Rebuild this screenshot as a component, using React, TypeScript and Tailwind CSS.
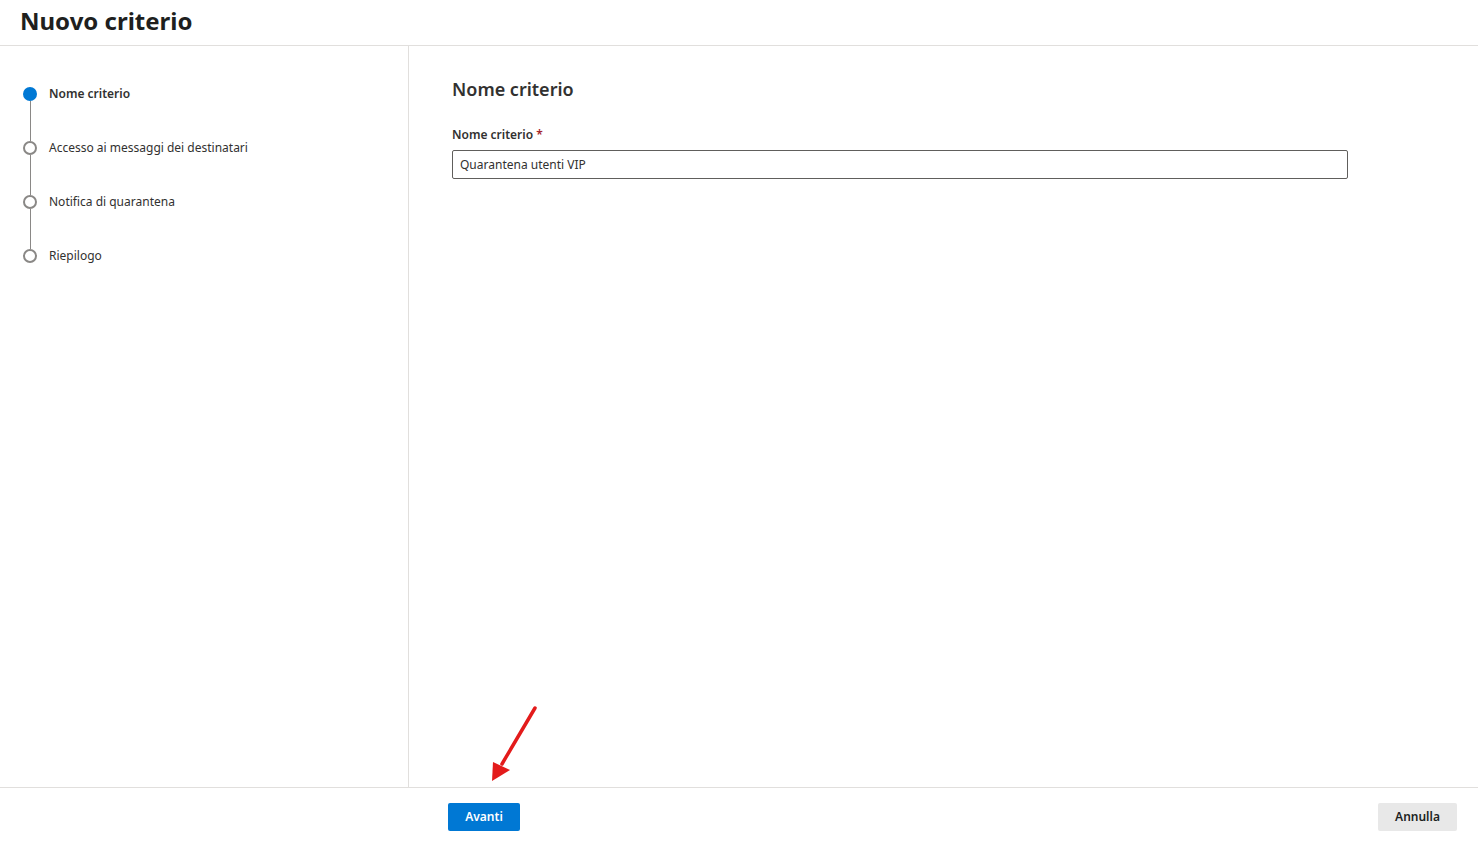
const steps = [
  "Nome criterio",
  "Accesso ai messaggi dei destinatari",
  "Notifica di quarantena",
  "Riepilogo",
];

function StepList() {
  return (
    <div className="pl-[23px] pt-[41px]">
      {steps.map((step, i) => (
        <div key={step}>
          <div className="flex items-center h-[14px]">
            {i === 0 ? (
              <span className="w-[14px] h-[14px] rounded-full bg-[#0078d4] shrink-0" />
            ) : (
              <span className="w-[14px] h-[14px] rounded-full border-2 border-[#8a8886] bg-white shrink-0" />
            )}
            <span
              className={
                "ml-[12px] text-[12px] text-[#323130] whitespace-nowrap " +
                (i === 0 ? "font-semibold" : "")
              }
            >
              {step}
            </span>
          </div>
          {i < steps.length - 1 && (
            <div className="ml-[6.5px] w-px h-[40px] bg-[#8a8886]" />
          )}
        </div>
      ))}
    </div>
  );
}

function Arrow() {
  return (
    <svg
      className="absolute left-[486px] top-[704px]"
      width="56"
      height="82"
      viewBox="0 0 56 82"
    >
      <line x1="49" y1="4" x2="16" y2="60" stroke="#e31b1b" strokeWidth="3.5" strokeLinecap="round" />
      <polygon points="6,77 7,58 24,66" fill="#e31b1b" />
    </svg>
  );
}

export default function App() {
  return (
    <div
      className="relative w-[1478px] h-[841px] flex flex-col bg-white text-[#323130] overflow-hidden"
      style={{ fontFamily: '"Segoe UI", "Noto Sans", "Open Sans", sans-serif' }}
    >
      <div className="h-[46px] flex items-center px-[20px] border-b border-[#e1dfdd] shrink-0">
        <h1 className="text-[24px] font-bold text-[#201f1e] leading-none -mt-[4px]">
          Nuovo criterio
        </h1>
      </div>
      <div className="flex flex-1 min-h-0">
        <div className="w-[409px] shrink-0 border-r border-[#e1dfdd]">
          <StepList />
        </div>
        <div className="flex-1 pl-[43px] pt-[30px]">
          <h2 className="text-[18px] font-semibold text-[#323130] leading-[26px]">
            Nome criterio
          </h2>
          <div className="mt-[24px] text-[12px] font-semibold leading-[18px]">
            Nome criterio <span className="text-[#a4262c]">*</span>
          </div>
          <div className="mt-[6px] w-[896px] h-[29px] border border-[#605e5c] rounded-[2px] flex items-center px-[7px] text-[12px]">
            Quarantena utenti VIP
          </div>
        </div>
      </div>
      <div className="h-[54px] shrink-0 border-t border-[#e1dfdd] flex items-start pt-[15px] pl-[448px] pr-[21px]">
        <button className="w-[72px] h-[28px] rounded-[2px] bg-[#0078d4] text-white text-[12px] font-semibold">
          Avanti
        </button>
        <div className="flex-1" />
        <button className="w-[79px] h-[28px] rounded-[2px] bg-[#e8e8e8] text-[#201f1e] text-[12px] font-semibold">
          Annulla
        </button>
      </div>
      <Arrow />
    </div>
  );
}
